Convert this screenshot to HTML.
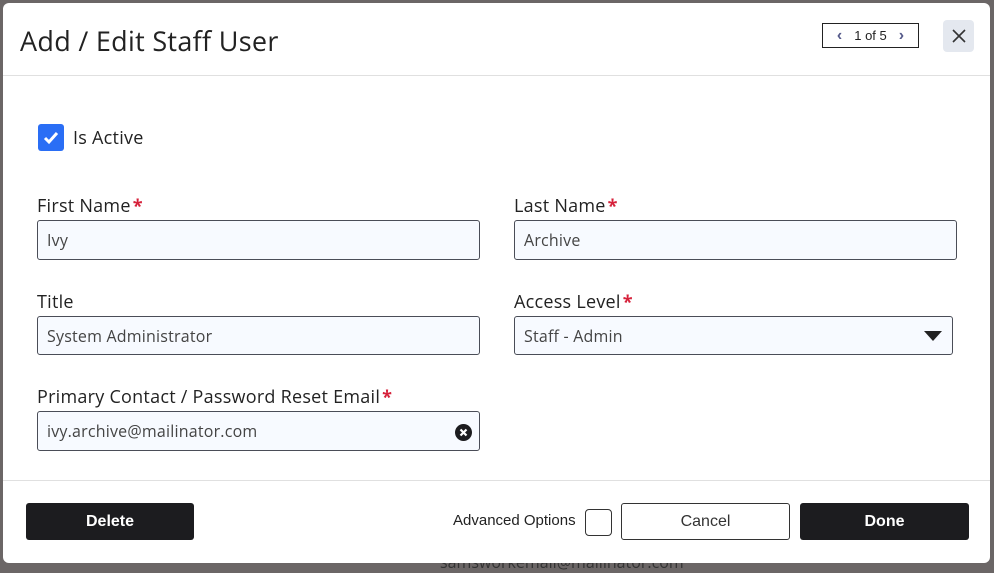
<!DOCTYPE html>
<html><head><style>
body{margin:0;width:994px;height:568px;background:#6b6666;position:relative;overflow:hidden;font-family:"Open Sans","Liberation Sans",sans-serif;color:#222}
.m{position:absolute;left:3px;top:3px;width:987px;height:560px;background:#fff;border-radius:6px;overflow:hidden}
.a{position:absolute}
.lbl{position:absolute;font-size:18px;color:#222;line-height:22px;letter-spacing:0.25px}
.lbl b{color:#d6213a;font-weight:700;margin-left:2px}
.in{position:absolute;background:#f7faff;border:1px solid #4a4d57;border-radius:3px;box-sizing:border-box;font-size:16px;color:#444;padding-left:9px;display:flex;align-items:center;letter-spacing:0.2px}
.btn{position:absolute;box-sizing:border-box;border-radius:3px;font-family:"Liberation Sans",sans-serif;font-size:16px;display:flex;align-items:center;justify-content:center}
.dk{background:#1c1c1f;color:#fff;font-weight:bold}
</style></head><body>
<div class="a" style="left:440px;top:551px;font-size:16px;color:#333">samsworkemail@mailinator.com</div>
<div class="m">
<div class="a" style="left:17px;top:19px;font-size:27px;color:#222;letter-spacing:0.3px">Add / Edit Staff User</div>
<div class="a" style="left:819px;top:20px;width:97px;height:25px;border:1px solid #222;box-sizing:border-box;font-family:'Liberation Sans',sans-serif;font-size:13px;display:flex;align-items:center;justify-content:center;gap:12px"><span style="color:#555a8a;font-weight:bold;font-size:16px">‹</span><span>1 of 5</span><span style="color:#555a8a;font-weight:bold;font-size:16px">›</span></div>
<div class="a" style="left:940px;top:17px;width:31px;height:32px;background:#e4e8ef;border-radius:4px;display:flex;align-items:center;justify-content:center"><svg width="14" height="14"><path d="M1 1l12 12M13 1L1 13" stroke="#333" stroke-width="1.6"/></svg></div>
<div class="a" style="left:0;top:72px;width:987px;height:1px;background:#e0e0e0"></div>
<div class="a" style="left:35px;top:121px;width:26px;height:27px;background:#2a6ef5;border-radius:3px"><svg width="26" height="27"><path d="M7 14l4 4 8-9" stroke="#fff" stroke-width="3" fill="none"/></svg></div>
<div class="lbl" style="left:70px;top:124px">Is Active</div>
<div class="lbl" style="left:34px;top:192px">First Name<b>*</b></div>
<div class="in" style="left:34px;top:217px;width:443px;height:40px">Ivy</div>
<div class="lbl" style="left:511px;top:192px">Last Name<b>*</b></div>
<div class="in" style="left:511px;top:217px;width:443px;height:40px">Archive</div>
<div class="lbl" style="left:34px;top:288px">Title</div>
<div class="in" style="left:34px;top:313px;width:443px;height:39px">System Administrator</div>
<div class="lbl" style="left:511px;top:288px">Access Level<b>*</b></div>
<div class="in" style="left:511px;top:313px;width:439px;height:39px">Staff - Admin<svg class="a" style="right:10px;top:14px" width="18" height="10"><path d="M0 0h18L9 10z" fill="#222"/></svg></div>
<div class="lbl" style="left:34px;top:383px">Primary Contact / Password Reset Email<b>*</b></div>
<div class="in" style="left:34px;top:408px;width:443px;height:40px">ivy.archive@mailinator.com<svg class="a" style="right:7px;top:12px" width="17" height="17"><circle cx="8.5" cy="8.5" r="8.5" fill="#1c1c1f"/><path d="M5.5 5.5l6 6M11.5 5.5l-6 6" stroke="#fff" stroke-width="2.2"/></svg></div>
<div class="a" style="left:0;top:477px;width:987px;height:1px;background:#e0e0e0"></div>
<div class="btn dk" style="left:23px;top:500px;width:168px;height:37px">Delete</div>
<div class="a" style="left:450px;top:509px;font-family:'Liberation Sans',sans-serif;font-size:15px;color:#222">Advanced Options</div>
<div class="a" style="left:582px;top:506px;width:27px;height:27px;border:1px solid #333;border-radius:4px;box-sizing:border-box"></div>
<div class="btn" style="left:618px;top:500px;width:169px;height:37px;border:1px solid #333;color:#333">Cancel</div>
<div class="btn dk" style="left:797px;top:500px;width:169px;height:37px">Done</div>
</div>
</body></html>
